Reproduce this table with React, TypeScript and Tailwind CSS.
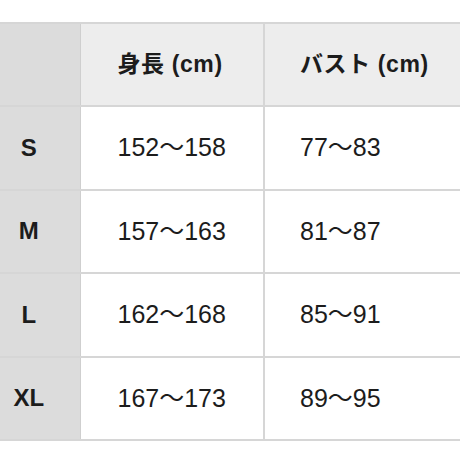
const rows = [
  { size: "S", height: "152〜158", bust: "77〜83" },
  { size: "M", height: "157〜163", bust: "81〜87" },
  { size: "L", height: "162〜168", bust: "85〜91" },
  { size: "XL", height: "167〜173", bust: "89〜95" },
];

const font = "font-['Liberation_Sans','Noto_Sans_CJK_JP',sans-serif]";

export default function App() {
  return (
    <div className={`w-[460px] h-[460px] bg-white overflow-hidden pt-[22px] text-[#1c1c1c] ${font}`}>
      <table className="w-[560px] border-collapse border-y-2 border-[#d6d6d6]">
        <thead>
          <tr className="h-[83px] bg-[#ededed]">
            <th className="w-[80px] bg-[#dcdcdc] border-r border-[#cfcfcf]"></th>
            <th className="w-[184px] pl-[37px] text-left text-[23px] font-bold tracking-[0.6px] border-r-2 border-[#d6d6d6]">
              身長 (cm)
            </th>
            <th className="pl-[35px] text-left text-[23px] font-bold tracking-[0.6px]">バスト (cm)</th>
          </tr>
        </thead>
        <tbody>
          {rows.map((r) => (
            <tr key={r.size} className="h-[83.5px] border-t-2 border-[#d6d6d6]">
              <td className="bg-[#dcdcdc] pr-[22px] text-center text-[24px] font-bold border-r border-[#cfcfcf]">
                {r.size}
              </td>
              <td className="pl-[37px] text-[25px] border-r-2 border-[#d6d6d6]">{r.height}</td>
              <td className="pl-[35px] text-[25px]">{r.bust}</td>
            </tr>
          ))}
        </tbody>
      </table>
    </div>
  );
}
